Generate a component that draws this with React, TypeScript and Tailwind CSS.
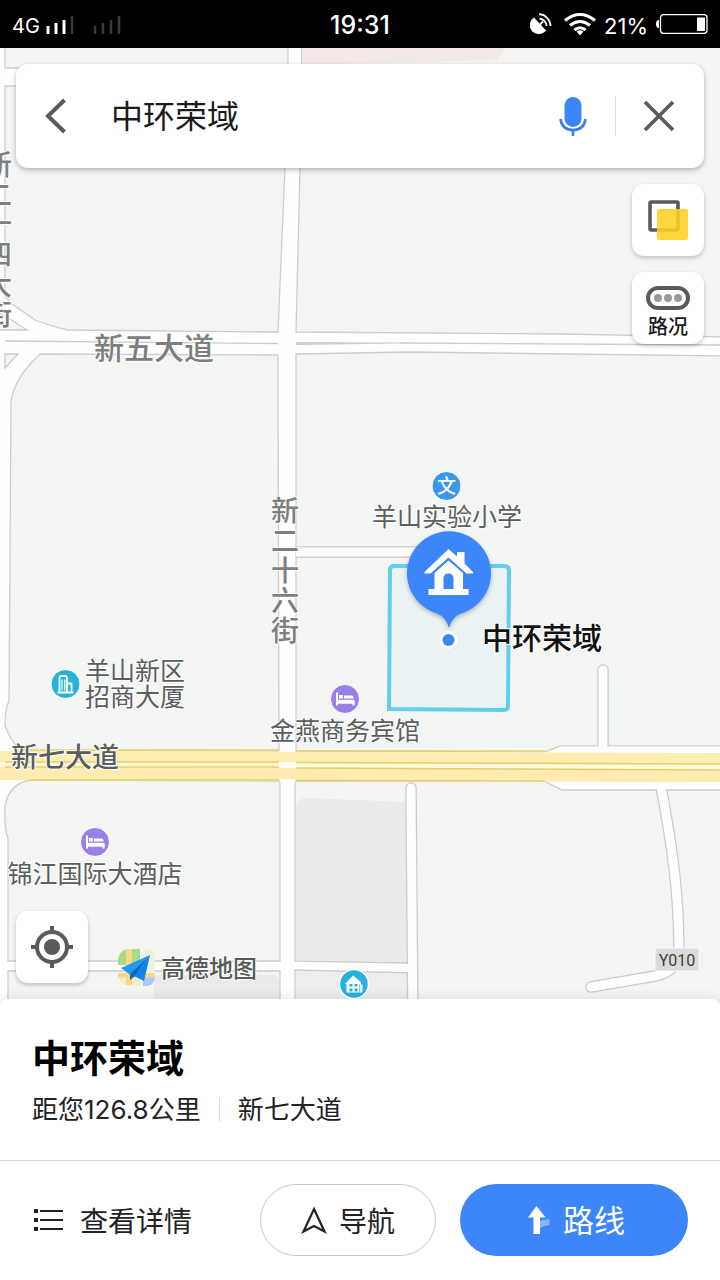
import React from 'react';

const BLOCKS = [
  'M5 40H288V68H5Z',
  'M5 86H287L285 168L278 332L68 330Q50 326 35 320L12 304L5 297Z',
  'M-2 330H27L10 319L-2 312Z',
  'M5 354H18L5 368Z',
  'M302 40H730V337L560 334L296 332L300 168Z',
  'M40 354L278 355L279 751H20Q5 732 5 722Q5 712 9 700L11 402Q14 378 40 354Z',
  'M296 354L410 352L730 356V746H560L545 752L296 751Z',
  'M30 780L280 781V961H8V838Q4 828 5 806Q9 784 30 780Z',
  'M8 971H280V1030H8Z',
  'M295 781H412V963L295 961Z',
  'M295 970L412 973V1030H295Z',
  'M412 781H544L562 790H730V1030H412Z',
];

const STREETS: { d: string; w: number; cap: 'round' | 'butt' }[] = [
  { d: 'M296 552H450', w: 9, cap: 'butt' },
  { d: 'M603 670V746', w: 9, cap: 'round' },
  { d: 'M411 788L413 1030', w: 9, cap: 'round' },
  { d: 'M661 787Q674 855 677 900Q679 925 679 955', w: 9, cap: 'butt' },
  { d: 'M591 987L655 976Q668 974 676 964', w: 9, cap: 'round' },
];

const LABELS: { t: string; x: number; y: number; size: number; fill: string; weight: number }[] = [
  { t: '新五大道', x: 154, y: 359, size: 30, fill: '#7d7f7d', weight: 500 },
  { t: '羊山实验小学', x: 447, y: 526, size: 25, fill: '#5a5e5d', weight: 400 },
  { t: '羊山新区', x: 135, y: 680, size: 25, fill: '#5a5e5d', weight: 400 },
  { t: '招商大厦', x: 135, y: 706, size: 25, fill: '#5a5e5d', weight: 400 },
  { t: '金燕商务宾馆', x: 345, y: 740, size: 25, fill: '#5a5e5d', weight: 400 },
  { t: '新七大道', x: 65, y: 767, size: 27, fill: '#5b5d5a', weight: 500 },
  { t: '锦江国际大酒店', x: 95, y: 883, size: 25, fill: '#5a5e5d', weight: 400 },
  { t: '中环荣域', x: 542, y: 649, size: 30, fill: '#111111', weight: 500 },
];

const VERTICAL_LABELS = [
  { t: '新二十四大街', x: -2, y: 175 },
  { t: '新二十六街', x: 285, y: 521 },
];

function Bed({ x, y }: { x: number; y: number }) {
  return (
    <g transform={`translate(${x} ${y})`}>
      <circle r="14.5" fill="#9b7fe6" stroke="#fff" strokeWidth="1" />
      <path
        d="M-8 -6.500V6.500M-8 3.500H8.500M8.500 6.500V2"
        fill="none"
        stroke="#fff"
        strokeWidth="2"
      />
      <path d="M-9 .8H9.500V4.500H-9Z" fill="#fff" />
      <path d="M-6 -.6V-4H-2V-.6ZM-1 -.6V-3.600H6.500q2 0 2 2v1Z" fill="#fff" />
    </g>
  );
}

function MapCanvas() {
  return (
    <svg
      className="absolute inset-0 h-full w-full"
      viewBox="0 48 720 959"
      preserveAspectRatio="xMinYMin slice"
      fontFamily='"Noto Sans CJK SC", sans-serif'
      role="img"
      aria-label="地图"
    >
      <rect y="40" width="720" height="990" fill="#fdfefd" />
      <g fill="#f3f5f3" stroke="#cbcecb" strokeWidth="1.3">
        {BLOCKS.map((d) => (
          <path key={d} d={d} />
        ))}
      </g>
      <path d="M303 40H512L497 60L302 65Z" fill="#f4e8e6" />
      <path d="M296 804Q300 797 308 798L407 802V962L296 960Z" fill="#e9ebe9" />
      <path d="M296 971L407 974V1030H296Z" fill="#eceeeb" />
      <path d="M154 975H274Q279 976 279 982V1030H154Z" fill="#e9ebe9" />

      <path d="M5 341L278 343.500M400 343L720 345" fill="none" stroke="#cbcecb" strokeWidth="1.3" />
      <path d="M296 342L400 342.500V343.500L296 345Z" fill="#cbcecb" />

      {STREETS.map((s) => (
        <path key={`c${s.d}`} d={s.d} fill="none" stroke="#c9ccc9" strokeWidth={s.w + 2.5} strokeLinecap={s.cap} />
      ))}
      {STREETS.map((s) => (
        <path key={s.d} d={s.d} fill="none" stroke="#fdfefd" strokeWidth={s.w} strokeLinecap={s.cap} />
      ))}
      <path d="M402 968H410" stroke="#fdfefd" strokeWidth="8" />
      <path d="M560 749.500H720M562 786H720" stroke="#fdfefd" strokeWidth="6" />

      <path d="M0 751L720 753V782L0 780Z" fill="#fdf8dc" />
      <path d="M0 751L720 753V764L0 762Z" fill="#fdedb0" />
      <path d="M0 767L720 770V782L0 780Z" fill="#fdebaf" />
      <path
        d="M18 750H279M296 751H545M5 762H279M296 762.500L720 764M5 767H279M296 768L720 770M28 780H279M296 780.500L545 781"
        stroke="#e6cf66"
        strokeWidth="1.3"
      />
      <path d="M280 750h15v2h-15ZM279 762h17v5h-17ZM280 779h15v4h-15Z" fill="#fdfefd" />

      <path
        d="M394 566H504Q509 566 509 571L508 706Q508 710 504 710L389 709L390 570Q390 566 394 566Z"
        fill="#e9f3f4"
        stroke="#63cdec"
        strokeWidth="4"
      />

      <g stroke="#fbfcfb" strokeWidth="2" strokeLinejoin="round" paintOrder="stroke" textAnchor="middle">
        {VERTICAL_LABELS.map((l) => (
          <text key={l.t} fontSize="28" fontWeight="500" fill="#7d7f7d">
            {Array.from(l.t).map((c, i) => (
              <tspan key={i} x={l.x} y={l.y + i * 30}>
                {c}
              </tspan>
            ))}
          </text>
        ))}
        {LABELS.map((l) => (
          <text key={l.t} x={l.x} y={l.y} fontSize={l.size} fontWeight={l.weight} fill={l.fill}>
            {l.t}
          </text>
        ))}
      </g>

      <circle cx="446.500" cy="486" r="14.500" fill="#3a97ea" stroke="#fff" />
      <text x="446.500" y="493" fontSize="19" fontWeight="500" fill="#fff" textAnchor="middle">
        文
      </text>
      <Bed x={345} y={699} />
      <Bed x={95} y={842} />

      <circle cx="65.500" cy="684" r="14.500" fill="#27b4d4" stroke="#fff" />
      <path d="M59.500 692V678q0-2 2-2h3.500q2 0 2 2v14M67 683.500h4.500v9M57.500 692.500h16" fill="none" stroke="#fff" strokeWidth="1.800" />
      <path d="M62 679.500v11M64.800 679.500v11" stroke="#fff" strokeWidth="1.200" />

      <circle cx="354" cy="984" r="14.500" fill="#25b2dc" stroke="#fff" strokeWidth="1.500" />
      <path d="M345 984l8-8.500 8 6.500v2.500h1.500V992.500H346.500V984Z" fill="#fff" />
      <path d="M349.500 984h3v2.500h-3Zm5 0h3v2.500h-3Zm-5 4.500h3v3h-3Zm5 0h3v3h-3Z" fill="#25b2dc" />
      <path d="M359.700 984.500v8" stroke="#25b2dc" strokeWidth=".8" />

      <rect x="655" y="948" width="44" height="23" rx="2" fill="#dadbda" stroke="#f9faf9" />
      <text x="677" y="966" fontSize="16" fill="#3d3f3d" textAnchor="middle" fontFamily='Roboto, "Noto Sans", sans-serif'>
        Y010
      </text>

      <path
        d="M449 628Q446 617 437 613.500A42 42 0 1 1 461 613.500Q452 617 449 628Z"
        fill="#3c85fb"
        className="drop-shadow-[0_2px_2px_rgba(0,0,0,0.25)]"
      />
      <path d="M448.500 549L457 556.500V552h7.500v11.500l8.500 8.500v1.500h-6.500L448.500 557.500 430.500 573.500H424.500V572Z" fill="#fff" />
      <path d="M434.500 573L448.500 560.500 463 573V589h5.500v6H428.500v-6h6Z" fill="#fff" />
      <path d="M443.500 589v-10q0-5.500 5-5.500t5 5.500v10Z" fill="#3c85fb" />
      <circle cx="448.500" cy="640" r="9.500" fill="#fff" stroke="#e1e6e8" strokeWidth=".6" />
      <circle cx="448.500" cy="640" r="6" fill="#3b86f0" />

      <path d="M118 961q1-12 12-12h10v16h-22Z" fill="#a4dd86" />
      <path d="M143 949h4q7 1 8 9v14h-12Z" fill="#eef0df" />
      <path d="M118 974h22v12h-10q-11-1-12-12Z" fill="#f4efc9" />
      <path d="M143 977h12q-1 9-9 9h-3Z" fill="#a9c8fa" />
      <path d="M126 949h6v36h-6ZM118 973h37v4.500H118Z" fill="#fbd683" />
      <path d="M150 955L121 968 130 974.500Z" fill="#1e9bf7" />
      <path d="M150 955L130 974V980L134.500 976.500Z" fill="#1267b8" />
      <path d="M150 955L134 976 144 981Z" fill="#0b84ee" />
      <text
        x="209"
        y="977"
        fontSize="24"
        fontWeight="500"
        fill="#565a58"
        textAnchor="middle"
        stroke="#fbfcfb"
        strokeWidth="2"
        paintOrder="stroke"
      >
        高德地图
      </text>
    </svg>
  );
}

function StatusBar() {
  return (
    <header className="grid h-12 grid-cols-3 items-center bg-black px-3 pt-1 font-['Inter',sans-serif] text-white">
      <div className="flex items-center gap-1.5 text-xl">
        <span>4G</span>
        <svg width="76" height="20" viewBox="0 0 76 20" aria-hidden="true">
          <path d="M2 18v-8M10 18v-11M18 18v-14" stroke="#fff" strokeWidth="3" />
          <path d="M26 18V0M49 18v-8M57 18v-11M65 18v-14M73 18V0" stroke="#3a3a3a" strokeWidth="2.500" />
        </svg>
      </div>
      <div className="text-center text-[25px] font-medium">19:31</div>
      <div className="flex items-center justify-end gap-2 text-[22px]">
        <svg className="mr-1 mb-1 shrink-0" width="22" height="22" viewBox="0 0 22 22" fill="none" aria-hidden="true">
          <path d="M4 4.500A9 9 0 1 0 16 17.500Z" fill="#fff" />
          <path d="M9 1.200A12 12 0 0 1 20.500 13M9.500 5.500A8 8 0 0 1 16.500 13" stroke="#fff" strokeWidth="1.800" />
          <path d="M10 11.500L13 8.500" stroke="#fff" strokeWidth="2" />
        </svg>
        <svg className="mb-1 shrink-0" width="32" height="23" viewBox="0 0 32 23" fill="none" aria-hidden="true">
          <path d="M1 7.500Q16 -4.500 31 7.500M6 12.500Q16 4.500 26 12.500M10.500 17Q16 12.500 21.500 17" stroke="#fff" strokeWidth="3" />
          <path d="M16 22.500l-3.500-4Q16 16 19.500 18.500Z" fill="#fff" />
        </svg>
        <span>21%</span>
        <svg className="mb-1 shrink-0" width="52" height="20" viewBox="0 0 52 20" aria-hidden="true">
          <path d="M3 6v8Q0 14 0 10T3 6Z" fill="#fff" />
          <rect x="4.500" y=".7" width="46.500" height="18.600" rx="3" fill="none" stroke="#fff" strokeWidth="1.300" />
          <path d="M41 3.500h8v13.500h-8Z" fill="#fff" />
        </svg>
      </div>
    </header>
  );
}

function SearchBar() {
  return (
    <form className="flex h-[104px] items-center rounded-xl bg-white shadow-[0_2px_5px_rgba(0,0,0,0.28)]">
      <button type="button" aria-label="返回" className="flex h-full w-20 items-center justify-center">
        <svg width="22" height="36" viewBox="0 0 22 36" fill="none" aria-hidden="true">
          <path d="M19.500 2L3 18 19.500 34" stroke="#5a5a5a" strokeWidth="4" />
        </svg>
      </button>
      <input
        aria-label="搜索地点"
        defaultValue="中环荣域"
        className="ml-[15px] h-full min-w-0 flex-1 bg-transparent pb-1 text-[32px] text-[#1b1b1b] outline-none"
      />
      <button type="button" aria-label="语音搜索" className="flex h-full w-[84px] items-center justify-center">
        <svg width="30" height="40" viewBox="0 0 30 40" fill="none" aria-hidden="true">
          <rect x="6.500" y="1" width="17" height="30" rx="8.500" fill="#3d86fa" />
          <path d="M2.500 23Q4 34 15 34T27.500 23M15 34v6" stroke="#3d7fe8" strokeWidth="2.600" />
        </svg>
      </button>
      <div className="h-10 w-px bg-[#dcdcdc]" />
      <button type="button" aria-label="清除" className="mr-0.5 flex h-full w-[86px] items-center justify-center">
        <svg width="32" height="32" viewBox="0 0 32 32" fill="none" aria-hidden="true">
          <path d="M2 2L30 30M30 2L2 30" stroke="#5a5a5a" strokeWidth="3.600" />
        </svg>
      </button>
    </form>
  );
}

const tile = 'flex size-[72px] flex-col items-center justify-center rounded-xl bg-white shadow-[0_2px_4px_rgba(0,0,0,0.22)]';

export default function App() {
  return (
    <div className="flex min-h-screen flex-col bg-white font-['Noto_Sans_CJK_SC',sans-serif]">
      <StatusBar />

      <main className="relative flex flex-1 flex-col overflow-hidden p-4 pb-6">
        <MapCanvas />
        <div className="relative flex flex-1 flex-col">
          <SearchBar />
          <div className="mt-4 flex flex-col items-end gap-4">
            <button type="button" aria-label="图层" className={tile}>
              <svg width="42" height="42" viewBox="0 0 42 42" fill="none" aria-hidden="true">
                <rect x="3" y="3" width="28" height="28" rx="1" stroke="#5a5a5a" strokeWidth="3.600" />
                <rect x="10" y="10" width="31" height="31" rx="2" fill="#fbd022" fillOpacity=".88" />
              </svg>
            </button>
            <button type="button" className={`${tile} pt-2`}>
              <svg width="44" height="24" viewBox="0 0 44 24" aria-hidden="true">
                <rect x="2" y="2" width="40" height="20" rx="10" fill="#fff" stroke="#5a5a5a" strokeWidth="4" />
                <circle cx="12" cy="12" r="4" fill="#999" />
                <circle cx="22" cy="12" r="4" fill="#999" />
                <circle cx="32" cy="12" r="4" fill="#999" />
              </svg>
              <span className="mt-1 text-xl leading-6 font-medium text-[#1b1b1b]">路况</span>
            </button>
          </div>
          <button type="button" aria-label="定位" className={`${tile} mt-auto`}>
            <svg width="42" height="42" viewBox="0 0 42 42" fill="none" stroke="#5a5a5a" aria-hidden="true">
              <circle cx="21" cy="21" r="15" strokeWidth="4" />
              <circle cx="21" cy="21" r="8" fill="#5a5a5a" stroke="none" />
              <path d="M21 0v6M21 36v6M0 21h6M36 21h6" strokeWidth="4" />
            </svg>
          </button>
        </div>
      </main>

      <section className="relative -mt-2 rounded-t-lg bg-white shadow-[0_-2px_12px_rgba(0,0,0,0.08)]">
        <div className="px-8 pt-[31px] pb-8">
          <h1 className="text-[38px] leading-[52px] font-bold text-black">中环荣域</h1>
          <div className="mt-2.5 flex items-center font-['Inter','Noto_Sans_CJK_SC',sans-serif] text-[26px] leading-9 text-[#222]">
            <span>距您126.8公里</span>
            <span className="mx-[18px] h-6 w-px bg-[#dedede]" />
            <span>新七大道</span>
          </div>
        </div>
        <div className="flex h-[120px] items-center gap-6 border-t border-[#d6d6d6] px-8 pb-0.5 text-[28px] text-[#222]">
          <button type="button" className="flex flex-1 items-center gap-4">
            <svg width="32" height="24" viewBox="0 0 32 24" aria-hidden="true">
              <path d="M2 1h4v4H2ZM2 10h4v4H2ZM2 19h4v4H2Z" fill="#222" />
              <path d="M8 3h23M8 12h23M8 21h23" stroke="#222" strokeWidth="2" />
            </svg>
            查看详情
          </button>
          <button
            type="button"
            className="flex h-[72px] w-44 items-center justify-center gap-3 rounded-full border border-[#c9c9c9]"
          >
            <svg width="26" height="28" viewBox="0 0 26 28" fill="none" aria-hidden="true">
              <path d="M13 3L23.500 25.500 13 20 2.500 25.500Z" stroke="#222" strokeWidth="2.200" />
            </svg>
            导航
          </button>
          <button
            type="button"
            className="flex h-[72px] w-[228px] items-center justify-center gap-3 rounded-full bg-[#3d86fa] pl-1 text-[31px] text-white"
          >
            <svg width="24" height="30" viewBox="0 0 24 30" aria-hidden="true">
              <path d="M11 17q4-2.500 11.500-3v6q-7 .500-11.500 5Z" fill="#86b5fc" />
              <path d="M9.500 1L18.500 12.500H13V29H6.500V12.500H1Z" fill="#fff" />
            </svg>
            路线
          </button>
        </div>
      </section>
    </div>
  );
}
